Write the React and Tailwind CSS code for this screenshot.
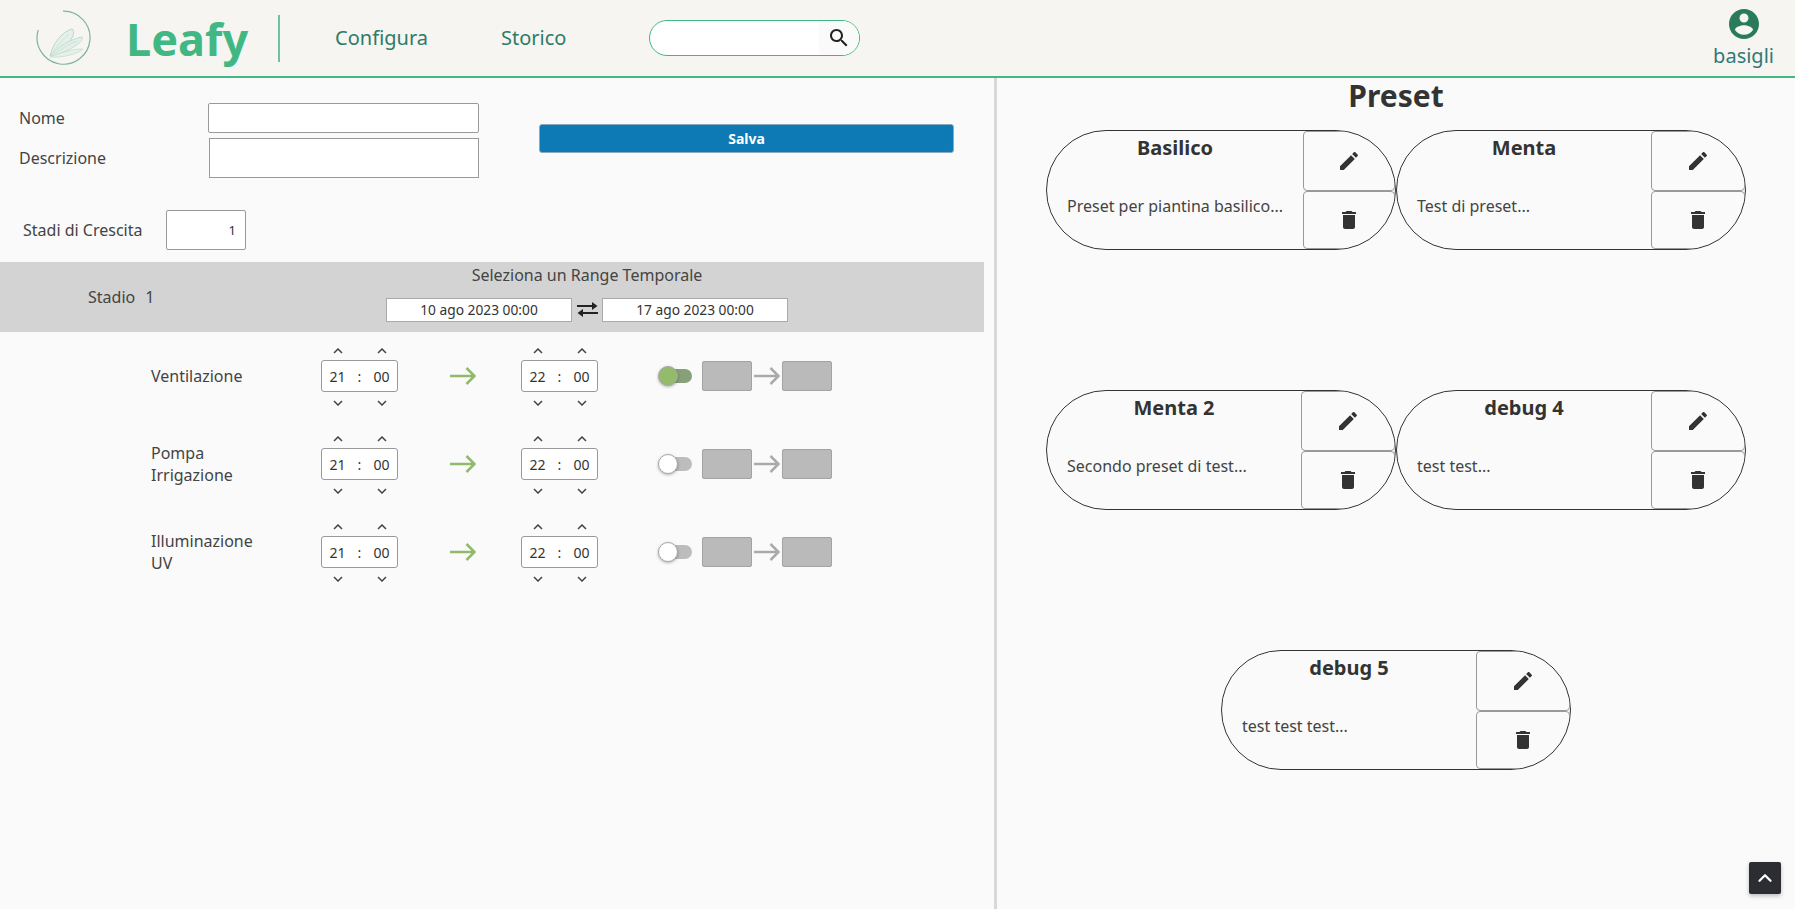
import { ChevronUp } from 'lucide-react';

const stages = [
  { label: ['Ventilazione'], on: true },
  { label: ['Pompa', 'Irrigazione'], on: false },
  { label: ['Illuminazione', 'UV'], on: false },
];

const presets = [
  { name: 'Basilico', desc: 'Preset per piantina basilico...' },
  { name: 'Menta', desc: 'Test di preset...' },
  { name: 'Menta 2', desc: 'Secondo preset di test...' },
  { name: 'debug 4', desc: 'test test...' },
  { name: 'debug 5', desc: 'test test test...' },
];

function MaterialIcon({ d, className }) {
  return (
    <svg viewBox="0 0 24 24" className={className} fill="currentColor">
      <path d={d} />
    </svg>
  );
}

const ICONS = {
  edit: 'M3 17.25V21h3.75L17.81 9.94l-3.75-3.75L3 17.25zM20.71 7.04c.39-.39.39-1.02 0-1.41l-2.34-2.34c-.39-.39-1.02-.39-1.41 0l-1.83 1.83 3.75 3.75 1.83-1.83z',
  trash: 'M6 19c0 1.1.9 2 2 2h8c1.1 0 2-.9 2-2V7H6v12zM19 4h-3.5l-1-1h-5l-1 1H5v2h14V4z',
  search: 'M15.5 14h-.79l-.28-.27C15.41 12.59 16 11.11 16 9.5 16 5.91 13.09 3 9.5 3S3 5.91 3 9.5 5.91 16 9.5 16c1.61 0 3.09-.59 4.23-1.57l.27.28v.79l5 4.99L20.49 19l-4.99-5zm-6 0C7.01 14 5 11.99 5 9.5S7.01 5 9.5 5 14 7.01 14 9.5 11.99 14 9.5 14z',
  user: 'M12 2C6.48 2 2 6.48 2 12s4.48 10 10 10 10-4.48 10-10S17.52 2 12 2zm0 3c1.66 0 3 1.34 3 3s-1.34 3-3 3-3-1.34-3-3 1.34-3 3-3zm0 14.2c-2.5 0-4.71-1.28-6-3.22.03-1.99 4-3.08 6-3.08 1.99 0 5.97 1.09 6 3.08-1.29 1.94-3.5 3.22-6 3.22z',
};

function Logo() {
  return (
    <svg viewBox="0 0 56 56" className="w-[56px] h-[56px]" fill="none">
      <path d="M27 1.2 A26.5 26.5 0 1 1 2.2 20" stroke="#7fb3a0" strokeWidth="1.2" />
      <path d="M14 46 C17 33 26 22 36 19 C38 20 38 23 37 26 C33 34 23 42 14 46 Z" stroke="#a9cfc0" strokeWidth="0.8" fill="#e6f0ea" />
      <path d="M14 46 C22 37 34 29 46 27 C47 29 45 32 42 34 C34 40 23 45 14 46 Z" stroke="#b9d8cb" strokeWidth="0.8" fill="#e3eee8" />
      <path d="M14 47 C24 43 36 39 47 39 C42 44 26 48 14 47 Z" stroke="#c3ddd2" strokeWidth="0.8" fill="#e6f0ea" />
      <path d="M16 44 C21 36 27 29 33 24 M17 45 C25 39 33 34 41 31" stroke="#c3ddd2" strokeWidth="0.7" />
    </svg>
  );
}

function SwapArrows() {
  return (
    <svg viewBox="0 0 21 15" className="ml-[5px] mr-[4px] w-[21px] h-[15px] text-[#222]" fill="currentColor">
      <path d="M0 3h15V0l5.5 4-5.5 4V5H0z" />
      <path d="M21 10H6V7L.5 11 6 15v-3h15z" />
    </svg>
  );
}

function Arrow({ className }) {
  return (
    <svg viewBox="0 0 26 18" className={className} fill="none" stroke="currentColor" strokeWidth="2.5">
      <path d="M0 9h24M16.5 1l8 8-8 8" />
    </svg>
  );
}

function Chevron({ down }) {
  return (
    <svg viewBox="0 0 10 6" className="w-[10px] h-[6px]" fill="none" stroke="#444" strokeWidth="1.5">
      <path d={down ? 'M1 1l4 4 4-4' : 'M1 5l4-4 4 4'} />
    </svg>
  );
}

function TimeBox({ hours, minutes }) {
  return (
    <div className="flex flex-col items-center pt-[2px]">
      <div className="mb-[6px] flex w-[54px] justify-between">
        <Chevron />
        <Chevron />
      </div>
      <div className="flex h-[32px] w-[77px] items-center justify-center rounded-[3px] border border-[#999] bg-white pt-[1px] text-sm text-[#333]">
        <span className="w-[20px] text-center">{hours}</span>
        <span className="w-[24px] text-center">:</span>
        <span className="w-[20px] text-center">{minutes}</span>
      </div>
      <div className="mt-[8px] flex w-[54px] justify-between">
        <Chevron down />
        <Chevron down />
      </div>
    </div>
  );
}

function StageRow({ label, on }) {
  return (
    <div className="flex h-[88px] items-center pl-[151px]">
      <div className="w-[170px] text-base leading-[22px] text-[#444]">
        {label.map((l) => (
          <div key={l}>{l}</div>
        ))}
      </div>
      <TimeBox hours="21" minutes="00" />
      <Arrow className="ml-[52px] w-[26px] h-[18px] text-[#8fbb6a]" />
      <div className="w-[45px]" />
      <TimeBox hours="22" minutes="00" />
      <div className="relative ml-[60px] h-[20px] w-[34px]">
        <div className={`absolute right-0 top-[3px] h-[14px] w-[26px] rounded-full ${on ? 'bg-[#88a078]' : 'bg-[#bdbdbd]'}`} />
        <div className={`absolute left-0 top-0 h-[20px] w-[20px] rounded-full border border-[#a8a8a8] shadow-[0_1px_3px_rgba(0,0,0,0.3)] ${on ? 'bg-[#93bb6b]' : 'bg-white'}`} />
      </div>
      <div className="ml-[10px] h-[30px] w-[50px] rounded-[2px] border border-[#a3a3a3] bg-[#bababa]" />
      <Arrow className="mx-[2px] w-[26px] h-[18px] text-[#aaaaaa]" />
      <div className="h-[30px] w-[50px] rounded-[2px] border border-[#a3a3a3] bg-[#bababa]" />
    </div>
  );
}

function PresetCard({ name, desc }) {
  return (
    <div className="flex h-[120px] w-[350px] overflow-hidden rounded-[60px] border border-[#333]">
      <div className="flex-1 px-[20px]">
        <div className="pt-[2px] text-center text-xl font-bold leading-[30px] text-[#333]">{name}</div>
        <div className="mt-[32px] whitespace-nowrap text-base leading-[22px] text-[#444]">{desc}</div>
      </div>
      <div className="flex w-[94px] flex-col">
        <button className="flex h-[60px] items-center justify-center rounded-[4px] border border-[#999] text-[#333]">
          <MaterialIcon d={ICONS.edit} className="w-[24px] h-[24px]" />
        </button>
        <button className="flex h-[58px] items-center justify-center rounded-[4px] border border-[#999] text-[#333]">
          <MaterialIcon d={ICONS.trash} className="w-[24px] h-[24px]" />
        </button>
      </div>
    </div>
  );
}

export default function App() {
  return (
    <div className="relative flex h-[909px] flex-col overflow-hidden bg-[#fafafa] font-['Noto_Sans',sans-serif]">
      {/* Header */}
      <header className="flex h-[78px] shrink-0 items-center border-b-2 border-[#41b883] bg-[#f6f5f1] pl-[36px] pr-[21px]">
        <Logo />
        <span className="ml-[34px] text-[45px] font-bold leading-none text-[#41b883]">Leafy</span>
        <div className="ml-[30px] h-[47px] w-[2px] bg-[#6fc2a0]" />
        <a className="ml-[55px] text-xl text-[#2f7a68]">Configura</a>
        <a className="ml-[73px] text-xl text-[#2f7a68]">Storico</a>
        <div className="ml-[83px] flex h-[36px] w-[211px] items-center overflow-hidden rounded-full border border-[#41b883] bg-white">
          <div className="flex-1" />
          <div className="flex h-full w-[40px] items-center justify-center bg-[#fafafa] text-[#222]">
            <MaterialIcon d={ICONS.search} className="w-[24px] h-[24px]" />
          </div>
        </div>
        <div className="mb-[2px] ml-auto flex flex-col items-center gap-[2px]">
          <MaterialIcon d={ICONS.user} className="w-[36px] h-[36px] text-[#2a7a5c]" />
          <span className="text-xl leading-[24px] text-[#2f7a78]">basigli</span>
        </div>
      </header>

      <main className="flex flex-1">
        {/* Form stadi */}
        <section className="w-[994px] shrink-0">
          <div className="flex pl-[19px] pt-[25px]">
            <div className="flex flex-col gap-[5px]">
              <div className="flex items-center">
                <label className="w-[189px] text-base text-[#444]">Nome</label>
                <input className="h-[30px] w-[271px] rounded-[2px] border border-[#999] bg-white" />
              </div>
              <div className="flex items-center">
                <label className="w-[190px] text-base text-[#444]">Descrizione</label>
                <input className="h-[40px] w-[270px] border border-[#999] bg-white" />
              </div>
            </div>
            <button className="ml-[60px] mt-[21px] h-[29px] w-[415px] rounded-[3px] border border-[#8aa9bd] bg-[#0d7ab5] text-sm font-bold text-white">
              Salva
            </button>
          </div>

          <div className="mt-[32px] flex items-center pl-[23px]">
            <label className="w-[143px] text-base text-[#444]">Stadi di Crescita</label>
            <input
              defaultValue="1"
              className="h-[40px] w-[80px] rounded-[2px] border border-[#999] bg-white pr-[9px] text-right text-[13px] text-[#333]"
            />
          </div>

          <div className="mt-[12px] flex h-[70px] w-[984px] items-center bg-[#d3d3d3] pl-[88px]">
            <div className="flex w-[298px] gap-[10px] text-base text-[#444]">
              <span>Stadio</span>
              <span>1</span>
            </div>
            <div className="flex flex-col items-center pb-[11px]">
              <div className="text-base leading-[26px] text-[#444]">Seleziona un Range Temporale</div>
              <div className="mt-[10px] flex items-center">
                <input
                  defaultValue="10 ago 2023 00:00"
                  className="h-[24px] w-[186px] border border-[#aaa] bg-white text-center text-[13.75px] text-[#333]"
                />
                <SwapArrows />
                <input
                  defaultValue="17 ago 2023 00:00"
                  className="h-[24px] w-[186px] border border-[#aaa] bg-white text-center text-[13.75px] text-[#333]"
                />
              </div>
            </div>
          </div>

          {stages.map((s) => (
            <StageRow key={s.label[0]} label={s.label} on={s.on} />
          ))}
        </section>

        {/* Preset */}
        <section className="flex-1 border-l-[3px] border-[#d8d8d8]">
          <h2 className="text-center text-[30px] font-bold leading-[36px] text-[#333]">Preset</h2>
          <div className="mx-auto mt-[16px] flex w-[700px] flex-wrap justify-center gap-y-[140px]">
            {presets.map((p) => (
              <PresetCard key={p.name} name={p.name} desc={p.desc} />
            ))}
          </div>
        </section>
      </main>

      <button className="absolute left-[1749px] top-[862px] flex h-[32px] w-[32px] items-center justify-center rounded-[2px] bg-[#2b2d33] text-white shadow-[0_2px_4px_rgba(0,0,0,0.25)]">
        <ChevronUp className="w-[22px] h-[22px]" strokeWidth={2.5} />
      </button>
    </div>
  );
}
